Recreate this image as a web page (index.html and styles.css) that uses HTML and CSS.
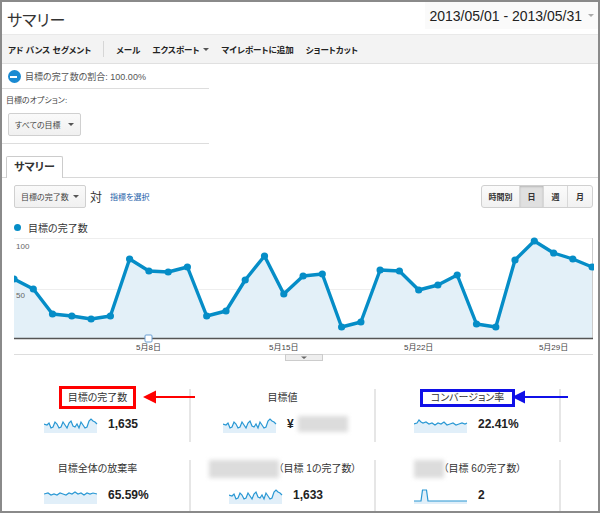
FILE: index.html
```html
<!DOCTYPE html>
<html lang="ja">
<head>
<meta charset="utf-8">
<title>サマリー</title>
<link rel="stylesheet" href="styles.css">
</head>
<body>
<div class="frame">
  <header class="header">
    <h1 class="title">サマリー</h1>
    <div class="date-range"><span class="date-text">2013/05/01 - 2013/05/31</span><span class="date-caret"></span></div>
  </header>

  <nav class="toolbar">
    <span class="tb-item">アド バンス セグメント</span>
    <span class="tb-sep"></span>
    <span class="tb-item">メール</span>
    <span class="tb-item">エクスポート <span class="caret"></span></span>
    <span class="tb-item">マイレポートに追加</span>
    <span class="tb-item">ショートカット</span>
  </nav>

  <div class="segment-row">
    <span class="seg-icon"></span>
    <span class="seg-text">目標の完了数の割合: 100.00%</span>
  </div>

  <div class="options">
    <div class="options-label">目標のオプション:</div>
    <div class="select select-goals"><span>すべての目標</span><span class="caret"></span></div>
  </div>

  <div class="tabs"><div class="tab">サマリー</div></div>

  <div class="controls">
    <div class="controls-left">
      <div class="select select-metric"><span>目標の完了数</span><span class="caret"></span></div>
      <span class="vs">対</span>
      <a class="metric-link">指標を選択</a>
    </div>
    <div class="btn-group">
      <span class="btn btn-hour">時間別</span>
      <span class="btn btn-active">日</span>
      <span class="btn">週</span>
      <span class="btn btn-last">月</span>
    </div>
  </div>

  <div class="legend"><span class="dot"></span>目標の完了数</div>

  <svg class="chart" width="580" height="128" viewBox="14 236 580 128" xmlns="http://www.w3.org/2000/svg">
    <line x1="14" y1="240.5" x2="593" y2="240.5" stroke="#eeeeee" stroke-width="1"/>
    <line x1="14" y1="291.5" x2="593" y2="291.5" stroke="#eeeeee" stroke-width="1"/>
    <polygon fill="#e3f0f8" points="14,281 33.3,291 52.5,316 71.8,318 91.1,321 110.4,318 129.6,261 148.9,273 168.2,274 187.4,269 206.7,318 226,313 245.2,282 264.5,258 283.8,296 303.1,278 322.3,276 341.6,329 360.9,324 380.1,272 399.4,273 418.7,292 437.9,287 457.2,277 476.5,326 495.8,329 515,262 534.3,243 553.6,255 572.8,261 592.1,269 592.1,340 14,340"/>
    <line x1="592.5" y1="240" x2="592.5" y2="340" stroke="#cccccc" stroke-width="1"/>
    <text x="16" y="251" class="axis-label">100</text>
    <text x="16" y="300" class="axis-label">50</text>
    <polyline fill="none" stroke="#058dc7" stroke-width="3.4" stroke-linejoin="round" points="14,281 33.3,291 52.5,316 71.8,318 91.1,321 110.4,318 129.6,261 148.9,273 168.2,274 187.4,269 206.7,318 226,313 245.2,282 264.5,258 283.8,296 303.1,278 322.3,276 341.6,329 360.9,324 380.1,272 399.4,273 418.7,292 437.9,287 457.2,277 476.5,326 495.8,329 515,262 534.3,243 553.6,255 572.8,261 592.1,269"/>
    <g fill="#058dc7">
      <circle cx="14" cy="281" r="3.6"/><circle cx="33.3" cy="291" r="3.6"/><circle cx="52.5" cy="316" r="3.6"/><circle cx="71.8" cy="318" r="3.6"/><circle cx="91.1" cy="321" r="3.6"/><circle cx="110.4" cy="318" r="3.6"/><circle cx="129.6" cy="261" r="3.6"/><circle cx="148.9" cy="273" r="3.6"/><circle cx="168.2" cy="274" r="3.6"/><circle cx="187.4" cy="269" r="3.6"/><circle cx="206.7" cy="318" r="3.6"/><circle cx="226" cy="313" r="3.6"/><circle cx="245.2" cy="282" r="3.6"/><circle cx="264.5" cy="258" r="3.6"/><circle cx="283.8" cy="296" r="3.6"/><circle cx="303.1" cy="278" r="3.6"/><circle cx="322.3" cy="276" r="3.6"/><circle cx="341.6" cy="329" r="3.6"/><circle cx="360.9" cy="324" r="3.6"/><circle cx="380.1" cy="272" r="3.6"/><circle cx="399.4" cy="273" r="3.6"/><circle cx="418.7" cy="292" r="3.6"/><circle cx="437.9" cy="287" r="3.6"/><circle cx="457.2" cy="277" r="3.6"/><circle cx="476.5" cy="326" r="3.6"/><circle cx="495.8" cy="329" r="3.6"/><circle cx="515" cy="262" r="3.6"/><circle cx="534.3" cy="243" r="3.6"/><circle cx="553.6" cy="255" r="3.6"/><circle cx="572.8" cy="261" r="3.6"/><circle cx="592.1" cy="269" r="3.6"/>
    </g>
    <line x1="14" y1="340.5" x2="593" y2="340.5" stroke="#555555" stroke-width="1.6"/>
    <rect x="145" y="337" width="7" height="7" rx="1" fill="#ffffff" stroke="#6a9fd4" stroke-width="1"/>
    <text x="148.5" y="352" class="x-label" text-anchor="middle">5月8日</text>
    <text x="283.8" y="352" class="x-label" text-anchor="middle">5月15日</text>
    <text x="418.7" y="352" class="x-label" text-anchor="middle">5月22日</text>
    <text x="553.6" y="352" class="x-label" text-anchor="middle">5月29日</text>
    <line x1="14" y1="356.5" x2="593" y2="356.5" stroke="#dddddd" stroke-width="1"/>
    <rect x="285.5" y="356.5" width="37" height="6" fill="#eeeeee" stroke="#cccccc" stroke-width="1"/>
    <polygon points="301,358.5 307,358.5 304,361" fill="#666666"/>
  </svg>

  <div class="metrics">
    <div class="metric">
      <div class="metric-title"><span class="hl-red">目標の完了数</span></div>
      <div class="metric-row">
        <svg class="spark" width="54" height="18" viewBox="0 0 54 18">
          <path class="spark-fill" d="M0,9 L3,10 5,8 7,13 9,12 11,7 13,9 15,13 17,12 19,7 21,10 23,13 25,8 27,6 29,11 31,12 33,9 35,13 37,7 39,10 41,13 43,12 45,6 47,4 49,6 51,7 53,9 L53,18 0,18Z"/>
          <polyline class="spark-line" points="0,9 3,10 5,8 7,13 9,12 11,7 13,9 15,13 17,12 19,7 21,10 23,13 25,8 27,6 29,11 31,12 33,9 35,13 37,7 39,10 41,13 43,12 45,6 47,4 49,6 51,7 53,9"/>
        </svg>
        <span class="metric-value">1,635</span>
      </div>
    </div>
    <div class="metric">
      <div class="metric-title">目標値</div>
      <div class="metric-row metric-row-wide">
        <svg class="spark" width="54" height="18" viewBox="0 0 54 18">
          <path class="spark-fill" d="M0,9 L3,10 5,8 7,13 9,12 11,7 13,9 15,13 17,12 19,7 21,10 23,13 25,8 27,6 29,11 31,12 33,9 35,13 37,7 39,10 41,13 43,12 45,6 47,4 49,6 51,7 53,9 L53,18 0,18Z"/>
          <polyline class="spark-line" points="0,9 3,10 5,8 7,13 9,12 11,7 13,9 15,13 17,12 19,7 21,10 23,13 25,8 27,6 29,11 31,12 33,9 35,13 37,7 39,10 41,13 43,12 45,6 47,4 49,6 51,7 53,9"/>
        </svg>
        <span class="metric-value">¥</span><span class="blur blur-value"></span>
      </div>
    </div>
    <div class="metric">
      <div class="metric-title"><span class="hl-blue">コンバージョン率</span></div>
      <div class="metric-row">
        <svg class="spark" width="54" height="18" viewBox="0 0 54 18">
          <path class="spark-fill" d="M0,9 L3,8 5,5 7,7 9,8 12,7 15,9 18,8 21,10 24,8 27,9 30,7 33,10 36,9 39,8 42,10 45,9 48,8 51,9 53,8 L53,18 0,18Z"/>
          <polyline class="spark-line" points="0,9 3,8 5,5 7,7 9,8 12,7 15,9 18,8 21,10 24,8 27,9 30,7 33,10 36,9 39,8 42,10 45,9 48,8 51,9 53,8"/>
        </svg>
        <span class="metric-value">22.41%</span>
      </div>
    </div>
    <div class="metric metric-empty"></div>

    <div class="metric">
      <div class="metric-title">目標全体の放棄率</div>
      <div class="metric-row">
        <svg class="spark" width="54" height="18" viewBox="0 0 54 18">
          <path class="spark-fill" d="M0,8 L4,7 7,9 10,8 13,9 16,7 19,8 22,9 25,7 28,8 31,6 34,8 37,7 40,9 43,7 46,8 49,7 53,8 L53,18 0,18Z"/>
          <polyline class="spark-line" points="0,8 4,7 7,9 10,8 13,9 16,7 19,8 22,9 25,7 28,8 31,6 34,8 37,7 40,9 43,7 46,8 49,7 53,8"/>
        </svg>
        <span class="metric-value">65.59%</span>
      </div>
    </div>
    <div class="metric">
      <div class="metric-title"><span class="blur blur-name"></span>（目標 1の完了数）</div>
      <div class="metric-row">
        <svg class="spark" width="54" height="18" viewBox="0 0 54 18">
          <path class="spark-fill" d="M0,9 L3,10 5,8 7,13 9,12 11,7 13,9 15,13 17,12 19,7 21,10 23,13 25,8 27,6 29,11 31,12 33,9 35,13 37,7 39,10 41,13 43,12 45,6 47,4 49,6 51,7 53,9 L53,18 0,18Z"/>
          <polyline class="spark-line" points="0,9 3,10 5,8 7,13 9,12 11,7 13,9 15,13 17,12 19,7 21,10 23,13 25,8 27,6 29,11 31,12 33,9 35,13 37,7 39,10 41,13 43,12 45,6 47,4 49,6 51,7 53,9"/>
        </svg>
        <span class="metric-value">1,633</span>
      </div>
    </div>
    <div class="metric">
      <div class="metric-title"><span class="blur blur-name-short"></span>（目標 6の完了数）</div>
      <div class="metric-row">
        <svg class="spark" width="54" height="18" viewBox="0 0 54 18">
          <path class="spark-fill" d="M0,15 L7,15 8.5,4 12.5,4 14,15 53,15 L53,18 0,18Z"/>
          <polyline class="spark-line" points="0,15 7,15 8.5,4 12.5,4 14,15 53,15"/>
        </svg>
        <span class="metric-value">2</span>
      </div>
    </div>
    <div class="metric metric-empty"></div>

    <svg class="arrow arrow-red" width="52" height="14" viewBox="0 0 52 14">
      <polygon points="0,7 13,0.5 13,13.5" fill="#ff0000"/>
      <line x1="12" y1="7" x2="52" y2="7" stroke="#ff0000" stroke-width="2"/>
    </svg>
    <svg class="arrow arrow-blue" width="56" height="14" viewBox="0 0 56 14">
      <polygon points="0,7 13,0.5 13,13.5" fill="#1010e8"/>
      <line x1="12" y1="7" x2="56" y2="7" stroke="#1010e8" stroke-width="2"/>
    </svg>
  </div>
</div>
</body>
</html>
```

FILE: styles.css
```css
* { box-sizing: border-box; }
html, body { margin: 0; padding: 0; background: #ffffff; }
body {
  font-family: "Liberation Sans", "Noto Sans CJK JP", sans-serif;
  color: #333333;
}
.frame {
  width: 600px;
  height: 513px;
  border: 2px solid #8a8a8a;
  overflow: hidden;
  background: #ffffff;
  font-feature-settings: "palt";
}

/* header */
.header {
  height: 32px;
  display: flex;
  justify-content: space-between;
  align-items: flex-start;
}
.title {
  margin: 0;
  padding: 8px 0 0 5px;
  font-size: 16px;
  line-height: 22px;
  font-weight: normal;
  color: #333333;
}
.date-range {
  display: flex;
  align-items: center;
  height: 27px;
  padding: 0 4px 0 4px;
  background: #fafafa;
}
.date-text {
  font-size: 14px;
  line-height: 18px;
  color: #222222;
  margin-right: 6px;
}
.date-caret {
  width: 0; height: 0;
  border-left: 3px solid transparent;
  border-right: 3px solid transparent;
  border-top: 3px solid #aaaaaa;
}

/* toolbar */
.toolbar {
  height: 30px;
  display: flex;
  align-items: center;
  gap: 12px;
  padding-left: 6px;
  background: #f3f3f3;
  border-top: 1px solid #e9e9e9;
  border-bottom: 1px solid #e0e0e0;
}
.tb-item {
  font-size: 8.5px;
  font-weight: bold;
  color: #222222;
  display: inline-flex;
  align-items: center;
  gap: 4px;
}
.tb-sep {
  width: 1px;
  height: 16px;
  background: #d6d6d6;
}
.caret {
  display: inline-block;
  width: 0; height: 0;
  border-left: 3px solid transparent;
  border-right: 3px solid transparent;
  border-top: 3px solid #555555;
}

/* segment row */
.segment-row {
  width: 207px;
  height: 25px;
  display: flex;
  align-items: center;
  padding-left: 6px;
  border-bottom: 1px solid #dddddd;
}
.seg-icon {
  width: 13px;
  height: 13px;
  border-radius: 50%;
  background: #1a8ad2;
  position: relative;
  margin-right: 4px;
  flex: none;
}
.seg-icon::after {
  content: "";
  position: absolute;
  left: 2px;
  top: 6px;
  width: 7px;
  height: 2px;
  background: #ffffff;
}
.seg-text {
  font-size: 9px;
  color: #555555;
}

/* options */
.options {
  width: 207px;
  padding: 6px 0 7px 4px;
  border-bottom: 1px solid #dddddd;
}
.options-label {
  font-size: 8px;
  line-height: 12px;
  color: #444444;
}
.select {
  display: flex;
  align-items: center;
  justify-content: space-between;
  height: 23px;
  padding: 0 6px 0 6px;
  border: 1px solid #d0d0d0;
  border-radius: 2px;
  background: linear-gradient(#fafafa, #f0f0f0);
  font-size: 8px;
  color: #444444;
}
.select-goals {
  width: 73px;
  margin: 6px 0 0 2px;
}

/* tabs */
.tabs {
  padding: 12px 0 0 4px;
  border-bottom: 1px solid #d8d8d8;
  display: flex;
}
.tab {
  height: 22px;
  padding: 0 7px;
  border: 1px solid #cccccc;
  border-bottom: none;
  border-radius: 2px 2px 0 0;
  background: #ffffff;
  font-size: 11px;
  font-weight: bold;
  line-height: 21px;
  color: #333333;
  margin-bottom: -1px;
}

/* controls */
.controls {
  display: flex;
  justify-content: space-between;
  align-items: center;
  padding: 7px 5px 0 12px;
}
.controls-left {
  display: flex;
  align-items: center;
}
.select-metric {
  width: 72px;
}
.vs {
  font-size: 12px;
  margin-left: 4px;
  color: #333333;
}
.metric-link {
  font-size: 8px;
  color: #1a5ea8;
  margin-left: 8px;
}
.btn-group {
  display: flex;
  height: 23px;
  border: 1px solid #d0d0d0;
  border-radius: 3px;
  background: linear-gradient(#fbfbfb, #f1f1f1);
  overflow: hidden;
}
.btn {
  width: 24px;
  display: flex;
  align-items: center;
  justify-content: center;
  font-size: 8px;
  font-weight: bold;
  color: #333333;
  border-right: 1px solid #d8d8d8;
}
.btn-hour { width: 38px; }
.btn-last { border-right: none; }
.btn-active {
  background: #e0e0e0;
  box-shadow: inset 0 1px 2px rgba(0, 0, 0, 0.18);
}

/* legend */
.legend {
  display: flex;
  align-items: center;
  margin-top: 12px;
  padding-left: 12px;
  height: 14px;
  font-size: 10px;
  color: #333333;
}
.dot {
  width: 7px;
  height: 7px;
  border-radius: 50%;
  background: #058dc7;
  margin-right: 7px;
}

/* chart */
.chart {
  display: block;
  margin-left: 12px;
}
.axis-label {
  font-family: "Liberation Sans", sans-serif;
  font-size: 8px;
  fill: #666666;
}
.x-label {
  font-family: "Liberation Sans", "Noto Sans CJK JP", sans-serif;
  font-size: 8px;
  fill: #444444;
}

/* metrics */
.metrics {
  position: relative;
  display: grid;
  grid-template-columns: 185px 185px 185px 1fr;
  grid-auto-rows: 53px;
  row-gap: 18px;
  padding: 27px 0 0 4px;
}
.metric {
  border-right: 2px solid #e6e6e6;
}
.metric-empty { border-right: none; }
.metric-title {
  text-align: center;
  font-size: 10px;
  line-height: 14px;
  height: 16px;
  padding-top: 1px;
  color: #333333;
  display: flex;
  justify-content: center;
  align-items: center;
}
.metric-row {
  display: flex;
  align-items: center;
  height: 18px;
  margin-top: 10px;
  padding-left: 38px;
}
.metric-row-wide { padding-left: 32px; }
.spark { display: block; flex: none; }
.spark-fill { fill: #e1eff9; }
.spark-line { fill: none; stroke: #2a98d4; stroke-width: 1.2; }
.metric-value {
  margin-left: 10px;
  font-size: 12px;
  font-weight: bold;
  color: #222222;
}
.blur {
  display: inline-block;
  background: #dcdcdc;
  filter: blur(2px);
}
.blur-value {
  width: 50px;
  height: 16px;
  margin-left: 4px;
}
.blur-name {
  width: 70px;
  height: 18px;
}
.blur-name-short {
  width: 30px;
  height: 18px;
}
.hl-red {
  display: inline-block;
  padding: 2px 6px 1px;
  margin: -2px -6px -1px;
  outline: 3px solid #ff0000;
}
.hl-blue {
  display: inline-block;
  line-height: 12px;
  padding: 0 8px;
  margin: 0 -8px;
  outline: 3px solid #1010e8;
}
.arrow {
  position: absolute;
  display: block;
}
.arrow-red { left: 141px; top: 28px; }
.arrow-blue { left: 510px; top: 28px; }
```
